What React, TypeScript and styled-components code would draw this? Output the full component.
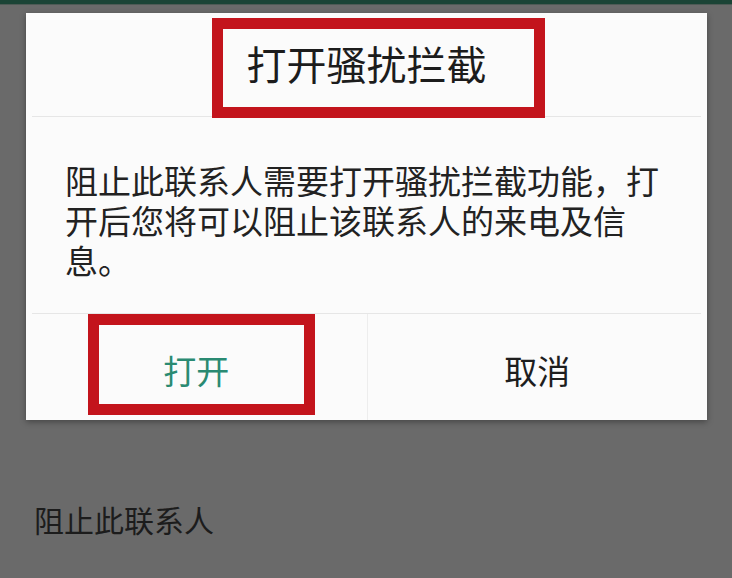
import React from "react";
import styled, { createGlobalStyle } from "styled-components";

const GlobalStyle = createGlobalStyle`
  html, body {
    margin: 0;
    padding: 0;
    background: #6a6a6a;
  }
  body {
    font-family: "Noto Sans CJK SC", "Noto Sans", sans-serif;
  }
`;

const Page = styled.div`
  width: 732px;
  height: 578px;
  overflow: hidden;
  background: #6a6a6a;
  display: flex;
  flex-direction: column;
`;

const StatusStrip = styled.div`
  height: 4px;
  background: #1b4436;
  border-bottom: 1px solid #4e5a55;
`;

const Dialog = styled.div`
  position: relative;
  margin: 8px 25px 0 26px;
  height: 407px;
  background: #fbfbfb;
  box-shadow: 0 2px 6px rgba(0, 0, 0, 0.35);
  display: flex;
  flex-direction: column;
`;

const Title = styled.div`
  height: 104px;
  margin: 0 6px;
  display: flex;
  align-items: center;
  justify-content: center;
  padding-bottom: 3px;
  box-sizing: border-box;
  font-size: 40px;
  color: #1c1c1c;
  border-bottom: 1px solid #e6e6e6;
`;

const Body = styled.div`
  flex: 1;
  margin: 0 6px;
  padding: 43px 40px 0 33px;
  font-size: 33px;
  line-height: 40px;
  color: #222;
  border-bottom: 1px solid #e6e6e6;
`;

const Actions = styled.div`
  height: 106px;
  display: grid;
  grid-template-columns: 1fr 1fr;
`;

// "打开" is the teal primary action, "取消" sits after a faint divider
const Action = styled.button<{ $primary?: boolean }>`
  border: none;
  background: transparent;
  font-family: inherit;
  font-size: 33px;
  padding: 6px 0 0;
  color: ${(p) => (p.$primary ? "#2a8a72" : "#1e1e1e")};
  border-left: ${(p) => (p.$primary ? "none" : "1px solid #ededed")};
`;

/* red annotation boxes drawn over the dialog */
const Mark = styled.div<{ $left: number; $top: number; $w: number; $h: number }>`
  position: absolute;
  left: ${(p) => p.$left}px;
  top: ${(p) => p.$top}px;
  width: ${(p) => p.$w}px;
  height: ${(p) => p.$h}px;
  box-sizing: border-box;
  border: 11px solid #c3141c;
  pointer-events: none;
`;

const ListItem = styled.div`
  margin-top: 79px;
  padding-left: 34px;
  font-size: 30px;
  line-height: 40px;
  color: #1c1c1c;
`;

export default function App() {
  return (
    <>
      <GlobalStyle />
      <Page>
        <StatusStrip />
        <Dialog>
          <Title>打开骚扰拦截</Title>
          <Body>阻止此联系人需要打开骚扰拦截功能，打开后您将可以阻止该联系人的来电及信息。</Body>
          <Actions>
            <Action $primary>打开</Action>
            <Action>取消</Action>
          </Actions>
          <Mark $left={186} $top={5} $w={333} $h={100} />
          <Mark $left={62} $top={301} $w={227} $h={101} />
        </Dialog>
        <ListItem>阻止此联系人</ListItem>
      </Page>
    </>
  );
}
